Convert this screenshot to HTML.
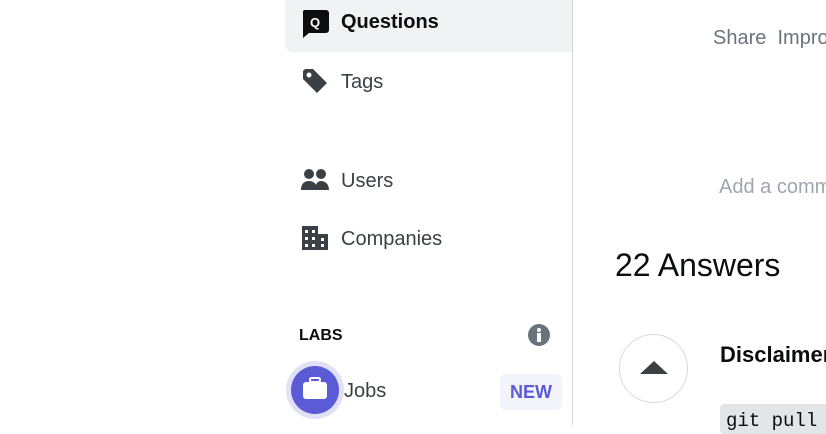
<!DOCTYPE html><html><head><style>
body{margin:0;width:826px;height:425px;overflow:hidden;background:#fff;font-family:"Liberation Sans",sans-serif;position:relative}
.a{position:absolute;white-space:nowrap}
</style></head><body>
<div class="a" style="left:285px;top:0;width:287px;height:52px;background:#f1f2f3;border-radius:0 0 0 8px"></div>
<div class="a" style="left:572px;top:0;width:1px;height:425px;background:#d6d9dc"></div>
<svg class="a" style="left:300px;top:9px" width="30" height="30" viewBox="0 0 30 30"><path d="M4 1h22a3 3 0 0 1 3 3v17a3 3 0 0 1-3 3H9l-6 5V4a3 3 0 0 1 1-3z" fill="#0c0d0e"/><text x="15" y="18" font-size="13" font-weight="bold" fill="#fff" text-anchor="middle" font-family="Liberation Sans">Q</text></svg>
<div class="a" style="left:341px;top:11px;font-size:20px;font-weight:bold;color:#0c0d0e">Questions</div>
<svg class="a" style="left:301px;top:67px" width="28" height="28" viewBox="0 0 28 28"><path d="M2 12V5a3 3 0 0 1 3-3h7l14 14-10 10z" fill="#3b4045"/><circle cx="8" cy="8" r="2.5" fill="#fff"/></svg>
<div class="a" style="left:341px;top:71px;font-size:20px;color:#3b4045">Tags</div>
<svg class="a" style="left:301px;top:168px" width="28" height="24" viewBox="0 0 28 24"><circle cx="8" cy="6" r="5" fill="#3b4045"/><circle cx="20" cy="6" r="5" fill="#3b4045"/><path d="M0 22c0-6 3-9 8-9s8 3 8 9zM14 22c0-5 2-9 6-9s8 3 8 9z" fill="#3b4045"/></svg>
<div class="a" style="left:341px;top:170px;font-size:20px;color:#3b4045">Users</div>
<svg class="a" style="left:302px;top:226px" width="26" height="24" viewBox="0 0 26 24"><path d="M0 0h16v24H0zM16 8h10v16H16z" fill="#3b4045"/><g fill="#fff"><rect x="3" y="4" width="3" height="3"/><rect x="10" y="4" width="3" height="3"/><rect x="3" y="11" width="3" height="3"/><rect x="10" y="11" width="3" height="3"/><rect x="3" y="18" width="3" height="3"/><rect x="10" y="18" width="3" height="3"/><rect x="19" y="12" width="3" height="3"/><rect x="19" y="18" width="3" height="3"/></g></svg>
<div class="a" style="left:341px;top:228px;font-size:20px;color:#3b4045">Companies</div>
<div class="a" style="left:299px;top:327px;font-size:16px;font-weight:bold;color:#0c0d0e">LABS</div>
<svg class="a" style="left:528px;top:324px" width="22" height="22"><circle cx="11" cy="11" r="11" fill="#6a737c"/><circle cx="11" cy="6" r="2" fill="#fff"/><rect x="9" y="9" width="4" height="9" fill="#fff"/></svg>
<div class="a" style="left:286px;top:361px;width:58px;height:58px;border-radius:50%;background:#e0e0f7"></div>
<div class="a" style="left:291px;top:366px;width:48px;height:48px;border-radius:50%;background:#5b5bd6"></div>
<svg class="a" style="left:302px;top:377px" width="26" height="24"><rect x="8" y="1" width="10" height="4" rx="1.5" fill="none" stroke="#fff" stroke-width="2"/><rect x="1" y="5" width="24" height="17" rx="3" fill="#fff"/></svg>
<div class="a" style="left:344px;top:380px;font-size:20px;color:#3b4045">Jobs</div>
<div class="a" style="left:500px;top:374px;width:62px;height:36px;border-radius:6px;background:#f3f3fc;color:#5b5bd6;font-weight:bold;font-size:18px;line-height:36px;text-align:center">NEW</div>
<div class="a" style="left:713px;top:27px;font-size:20px;color:#6a737c">Share&nbsp; Improve</div>
<div class="a" style="left:719px;top:176px;font-size:20px;color:#9fa6ad">Add a comment</div>
<div class="a" style="left:615px;top:247px;font-size:32px;color:#0c0d0e">22 Answers</div>
<div class="a" style="left:619px;top:334px;width:67px;height:67px;border-radius:50%;border:1px solid #d6d9dc"></div>
<svg class="a" style="left:640px;top:361px" width="28" height="14"><path d="M0 13L14 0l14 13z" fill="#3b4045"/></svg>
<div class="a" style="left:720px;top:342px;font-size:22px;font-weight:bold;color:#0c0d0e">Disclaimer</div>
<div class="a" style="left:720px;top:404px;width:120px;height:30px;background:#e3e6e8;border-radius:4px;font-family:'Liberation Mono',monospace;font-size:19px;color:#0c0d0e;padding:6px 6px;box-sizing:border-box">git pull</div>
</body></html>
